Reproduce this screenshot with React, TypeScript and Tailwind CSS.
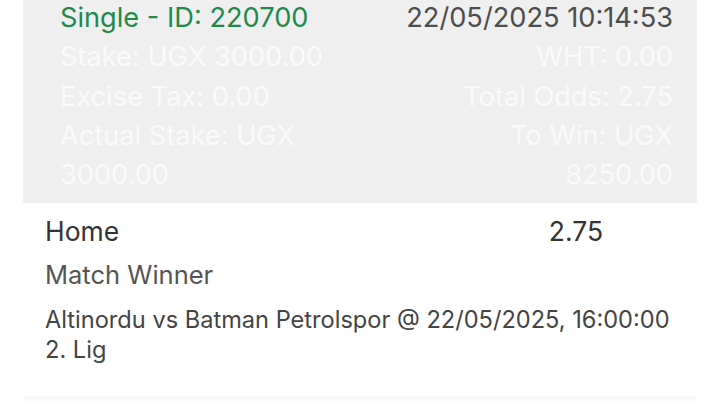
export default function App() {
  return (
    <div className="w-[705px] h-[401px] overflow-hidden bg-white" style={{ fontFamily: 'Inter, "Noto Sans", sans-serif' }}>
      <div className="ml-[23px] mr-[8px] -mt-[2px]">
        {/* summary */}
        <div className="bg-[#efefef] pl-[37px] pr-[24px] pb-[9px] flex justify-between text-[27.2px] leading-[39.3px]">
          <div className="flex flex-col">
            <span className="text-[#1e8a4b]">Single - ID: 220700</span>
            <span className="text-[#fafafa]">Stake: UGX 3000.00</span>
            <span className="text-[#fafafa]">Excise Tax: 0.00</span>
            <span className="text-[#fafafa]">
              Actual Stake: UGX
              <br />
              3000.00
            </span>
          </div>
          <div className="flex flex-col items-end text-right">
            <span className="text-[#4d4d4d]">22/05/2025 10:14:53</span>
            <span className="text-[#fafafa]">WHT: 0.00</span>
            <span className="text-[#fafafa]">Total Odds: 2.75</span>
            <span className="text-[#fafafa]">
              To Win: UGX
              <br />
              8250.00
            </span>
          </div>
        </div>

        {/* selection */}
        <div className="pl-[22px] pr-[24px] pt-[11px]">
          <div className="flex justify-between text-[26.5px] leading-[34px] text-[#333]">
            <span>Home</span>
            <span className="mr-[70px]">2.75</span>
          </div>
          <div className="mt-[10px] text-[25.5px] leading-[34px] text-[#555]">Match Winner</div>
          <div className="mt-[13px] text-[23.6px] leading-[30px] text-[#444]">
            Altinordu vs Batman Petrolspor @ 22/05/2025, 16:00:00
            <br />
            2. Lig
          </div>
        </div>
        <div className="mt-[31px] h-[10px] bg-[#fafafa]" />
      </div>
    </div>
  );
}
